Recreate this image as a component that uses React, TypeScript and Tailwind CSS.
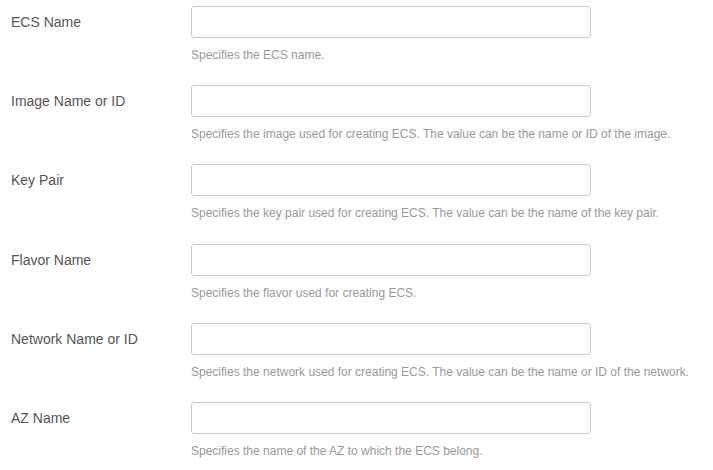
const fields = [
  { label: "ECS Name", help: "Specifies the ECS name." },
  {
    label: "Image Name or ID",
    help: "Specifies the image used for creating ECS. The value can be the name or ID of the image.",
  },
  {
    label: "Key Pair",
    help: "Specifies the key pair used for creating ECS. The value can be the name of the key pair.",
  },
  { label: "Flavor Name", help: "Specifies the flavor used for creating ECS." },
  {
    label: "Network Name or ID",
    help: "Specifies the network used for creating ECS. The value can be the name or ID of the network.",
  },
  { label: "AZ Name", help: "Specifies the name of the AZ to which the ECS belong." },
];

const App = () => {
  return (
    <div className="min-h-screen bg-white pt-[6px] font-['Liberation_Sans',Arial,sans-serif]">
      {fields.map((f) => (
        <div key={f.label} className="flex h-[79.2px]">
          <label className="w-[191px] pl-[11px] text-[14px] leading-[32px] text-[#555]">
            {f.label}
          </label>
          <div>
            <input
              type="text"
              className="block h-[32px] w-[400px] rounded-[3px] border border-[#ccc] bg-white px-2 text-[14px] outline-none"
            />
            <p className="mt-[9px] text-[12px] leading-[17px] text-[#999]">{f.help}</p>
          </div>
        </div>
      ))}
    </div>
  );
};

export default App;
